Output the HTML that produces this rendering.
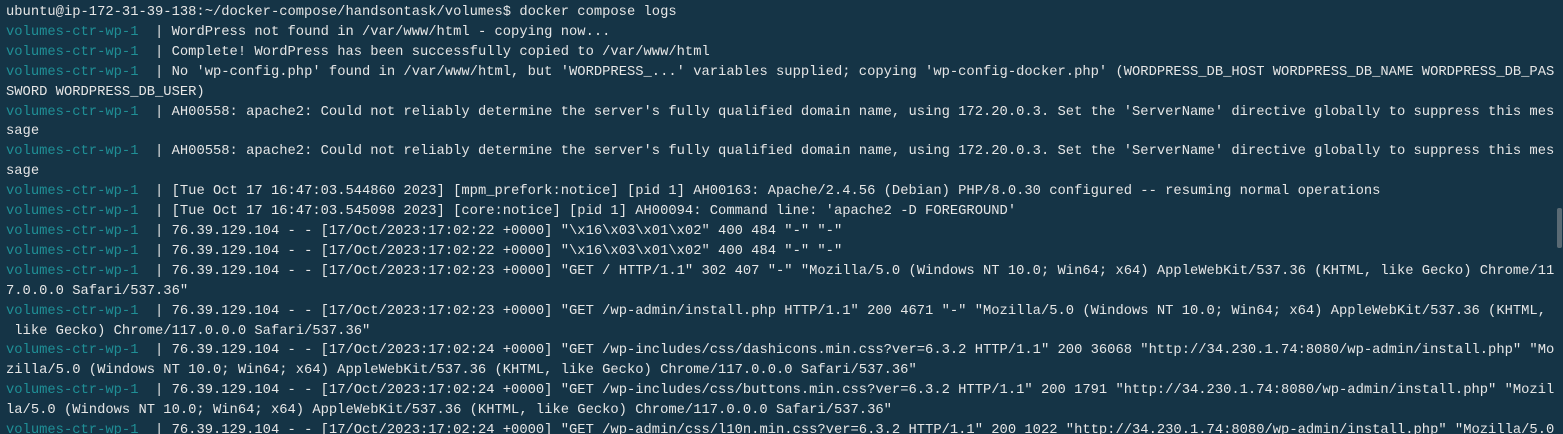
<!DOCTYPE html>
<html><head><meta charset="utf-8"><style>
html,body{margin:0;padding:0;background:#153446;width:1563px;height:434px;overflow:hidden}
pre{margin:0;padding:3px 0 0 6px;font-family:"Liberation Mono",monospace;font-size:13.8px;line-height:19.9px;color:#e6e6e6;white-space:pre}
.c{color:#1f8f96}
.sb{position:absolute;left:1557px;top:208px;width:5px;height:40px;background:#5a6a74;border-radius:2px}
</style></head><body><pre>ubuntu@ip-172-31-39-138:~/docker-compose/handsontask/volumes$ docker compose logs
<span class="c">volumes-ctr-wp-1</span>  | WordPress not found in /var/www/html - copying now...
<span class="c">volumes-ctr-wp-1</span>  | Complete! WordPress has been successfully copied to /var/www/html
<span class="c">volumes-ctr-wp-1</span>  | No 'wp-config.php' found in /var/www/html, but 'WORDPRESS_...' variables supplied; copying 'wp-config-docker.php' (WORDPRESS_DB_HOST WORDPRESS_DB_NAME WORDPRESS_DB_PAS
SWORD WORDPRESS_DB_USER)
<span class="c">volumes-ctr-wp-1</span>  | AH00558: apache2: Could not reliably determine the server's fully qualified domain name, using 172.20.0.3. Set the 'ServerName' directive globally to suppress this mes
sage
<span class="c">volumes-ctr-wp-1</span>  | AH00558: apache2: Could not reliably determine the server's fully qualified domain name, using 172.20.0.3. Set the 'ServerName' directive globally to suppress this mes
sage
<span class="c">volumes-ctr-wp-1</span>  | [Tue Oct 17 16:47:03.544860 2023] [mpm_prefork:notice] [pid 1] AH00163: Apache/2.4.56 (Debian) PHP/8.0.30 configured -- resuming normal operations
<span class="c">volumes-ctr-wp-1</span>  | [Tue Oct 17 16:47:03.545098 2023] [core:notice] [pid 1] AH00094: Command line: 'apache2 -D FOREGROUND'
<span class="c">volumes-ctr-wp-1</span>  | 76.39.129.104 - - [17/Oct/2023:17:02:22 +0000] "\x16\x03\x01\x02" 400 484 "-" "-"
<span class="c">volumes-ctr-wp-1</span>  | 76.39.129.104 - - [17/Oct/2023:17:02:22 +0000] "\x16\x03\x01\x02" 400 484 "-" "-"
<span class="c">volumes-ctr-wp-1</span>  | 76.39.129.104 - - [17/Oct/2023:17:02:23 +0000] "GET / HTTP/1.1" 302 407 "-" "Mozilla/5.0 (Windows NT 10.0; Win64; x64) AppleWebKit/537.36 (KHTML, like Gecko) Chrome/11
7.0.0.0 Safari/537.36"
<span class="c">volumes-ctr-wp-1</span>  | 76.39.129.104 - - [17/Oct/2023:17:02:23 +0000] "GET /wp-admin/install.php HTTP/1.1" 200 4671 "-" "Mozilla/5.0 (Windows NT 10.0; Win64; x64) AppleWebKit/537.36 (KHTML,
 like Gecko) Chrome/117.0.0.0 Safari/537.36"
<span class="c">volumes-ctr-wp-1</span>  | 76.39.129.104 - - [17/Oct/2023:17:02:24 +0000] "GET /wp-includes/css/dashicons.min.css?ver=6.3.2 HTTP/1.1" 200 36068 "http://34.230.1.74:8080/wp-admin/install.php" "Mo
zilla/5.0 (Windows NT 10.0; Win64; x64) AppleWebKit/537.36 (KHTML, like Gecko) Chrome/117.0.0.0 Safari/537.36"
<span class="c">volumes-ctr-wp-1</span>  | 76.39.129.104 - - [17/Oct/2023:17:02:24 +0000] "GET /wp-includes/css/buttons.min.css?ver=6.3.2 HTTP/1.1" 200 1791 "http://34.230.1.74:8080/wp-admin/install.php" "Mozil
la/5.0 (Windows NT 10.0; Win64; x64) AppleWebKit/537.36 (KHTML, like Gecko) Chrome/117.0.0.0 Safari/537.36"
<span class="c">volumes-ctr-wp-1</span>  | 76.39.129.104 - - [17/Oct/2023:17:02:24 +0000] "GET /wp-admin/css/l10n.min.css?ver=6.3.2 HTTP/1.1" 200 1022 "http://34.230.1.74:8080/wp-admin/install.php" "Mozilla/5.0
</pre><div class="sb"></div></body></html>
